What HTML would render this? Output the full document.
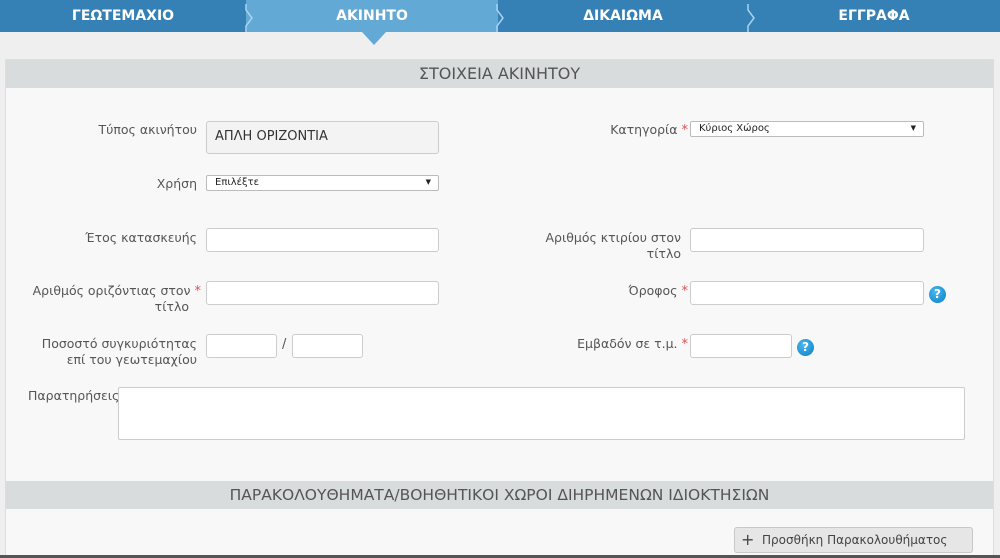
<!DOCTYPE html>
<html><head><meta charset="utf-8"><style>
*{box-sizing:border-box;margin:0;padding:0}
body{width:1000px;height:558px;overflow:hidden;background:#efefef;font-family:"DejaVu Sans","Liberation Sans",sans-serif;position:relative;color:#555}
.a{position:absolute}
.nav{left:0;top:0;width:1000px;height:32px;background:#3580b5}
.tab{top:0;height:32px;line-height:32px;color:#fff;font-weight:bold;font-size:14px;text-align:center}
.lbl{font-size:12.5px;color:#555;text-align:right;line-height:16px}
.st{color:#d9534f;font-size:13px}
.in{background:#fff;border:1px solid #ccc;border-radius:3px}
.sel{background:#fff;border:1px solid #bbb;border-radius:2px;font-size:10px;color:#222;padding-left:8px;line-height:13px}
.sel:after{content:"▼";position:absolute;right:7px;top:0;font-size:7px}
.help{width:17px;height:17px;border-radius:50%;background:radial-gradient(circle at 40% 35%,#4bb8f0,#0a7fc4);color:#fff;font-weight:bold;font-size:12px;text-align:center;line-height:17px}
.hd{left:6px;width:987px;height:28px;background:#d8dcdc;text-align:center;line-height:28px;font-size:16px;color:#555}
</style></head><body>
<div class="a nav"></div>
<div class="a" style="left:246px;top:0;width:252px;height:32px;background:#62a9d6"></div>
<div class="a" style="left:362px;top:32px;width:0;height:0;border-left:12px solid transparent;border-right:12px solid transparent;border-top:13px solid #62a9d6"></div>
<svg class="a" style="left:0;top:0" width="1000" height="36"><g fill="none" stroke="#a9d3ef" stroke-width="1.5"><path d="M246 4 L246 10 L252 18 L246 26 L246 32"/><path d="M497 4 L497 10 L503 18 L497 26 L497 32"/><path d="M748 4 L748 10 L754 18 L748 26 L748 32"/></g></svg>
<div class="a tab" style="left:0;width:246px">ΓΕΩΤΕΜΑΧΙΟ</div>
<div class="a tab" style="left:246px;width:252px">ΑΚΙΝΗΤΟ</div>
<div class="a tab" style="left:498px;width:250px">ΔΙΚΑΙΩΜΑ</div>
<div class="a tab" style="left:748px;width:252px">ΕΓΓΡΑΦΑ</div>

<div class="a" style="left:5px;top:59px;width:989px;height:499px;background:#f8f8f8;border:1px solid #ddd"></div>
<div class="a hd" style="top:60px">ΣΤΟΙΧΕΙΑ ΑΚΙΝΗΤΟΥ</div>

<div class="a lbl" style="left:20px;top:122px;width:177px">Τύπος ακινήτου</div>
<div class="a in" style="left:206px;top:121px;width:233px;height:33px;background:#f3f3f3;font-size:13px;color:#333;padding:7px 0 0 8px">ΑΠΛΗ ΟΡΙΖΟΝΤΙΑ</div>
<div class="a lbl" style="left:20px;top:176px;width:177px">Χρήση</div>
<div class="a sel" style="left:206px;top:175px;width:233px;height:16px">Επιλέξτε</div>

<div class="a lbl" style="left:500px;top:122px;width:188px">Κατηγορία <span class="st">*</span></div>
<div class="a sel" style="left:690px;top:121px;width:234px;height:16px">Κύριος Χώρος</div>

<div class="a lbl" style="left:20px;top:230px;width:177px">Έτος κατασκευής</div>
<div class="a in" style="left:206px;top:228px;width:233px;height:24px"></div>
<div class="a lbl" style="left:480px;top:230px;width:201px">Αριθμός κτιρίου στον<br>τίτλο</div>
<div class="a in" style="left:690px;top:228px;width:234px;height:24px"></div>

<div class="a lbl" style="left:10px;top:283px;width:191px">Αριθμός οριζόντιας στον <span class="st">*</span></div>
<div class="a lbl" style="left:10px;top:299px;width:179px">τίτλο</div>
<div class="a in" style="left:206px;top:281px;width:233px;height:24px"></div>
<div class="a lbl" style="left:500px;top:283px;width:188px">Όροφος <span class="st">*</span></div>
<div class="a in" style="left:690px;top:281px;width:234px;height:24px"></div>
<div class="a help" style="left:929px;top:286px">?</div>

<div class="a lbl" style="left:10px;top:336px;width:187px">Ποσοστό συγκυριότητας<br>επί του γεωτεμαχίου</div>
<div class="a in" style="left:206px;top:334px;width:71px;height:24px"></div>
<div class="a" style="left:282px;top:337px;font-size:13px">/</div>
<div class="a in" style="left:292px;top:334px;width:71px;height:24px"></div>
<div class="a lbl" style="left:500px;top:336px;width:188px">Εμβαδόν σε τ.μ. <span class="st">*</span></div>
<div class="a in" style="left:690px;top:334px;width:102px;height:24px"></div>
<div class="a help" style="left:797px;top:339px">?</div>

<div class="a lbl" style="left:28px;top:388px;text-align:left;width:92px;overflow:hidden;white-space:nowrap">Παρατηρήσεις</div>
<div class="a in" style="left:118px;top:387px;width:847px;height:53px;border-radius:2px"></div>

<div class="a hd" style="top:481px;font-size:15.5px">ΠΑΡΑΚΟΛΟΥΘΗΜΑΤΑ/ΒΟΗΘΗΤΙΚΟΙ ΧΩΡΟΙ ΔΙΗΡΗΜΕΝΩΝ ΙΔΙΟΚΤΗΣΙΩΝ</div>
<div class="a" style="left:734px;top:527px;width:239px;height:26px;background:#e6e6e6;border:1px solid #c8c8c8;border-radius:3px;font-size:12px;color:#444;line-height:24px;padding-left:6px"><span style="font-size:16px;vertical-align:-1px">+</span>&nbsp; Προσθήκη Παρακολουθήματος</div>
<div class="a" style="left:0;top:555px;width:1000px;height:3px;background:#555"></div>
</body></html>
